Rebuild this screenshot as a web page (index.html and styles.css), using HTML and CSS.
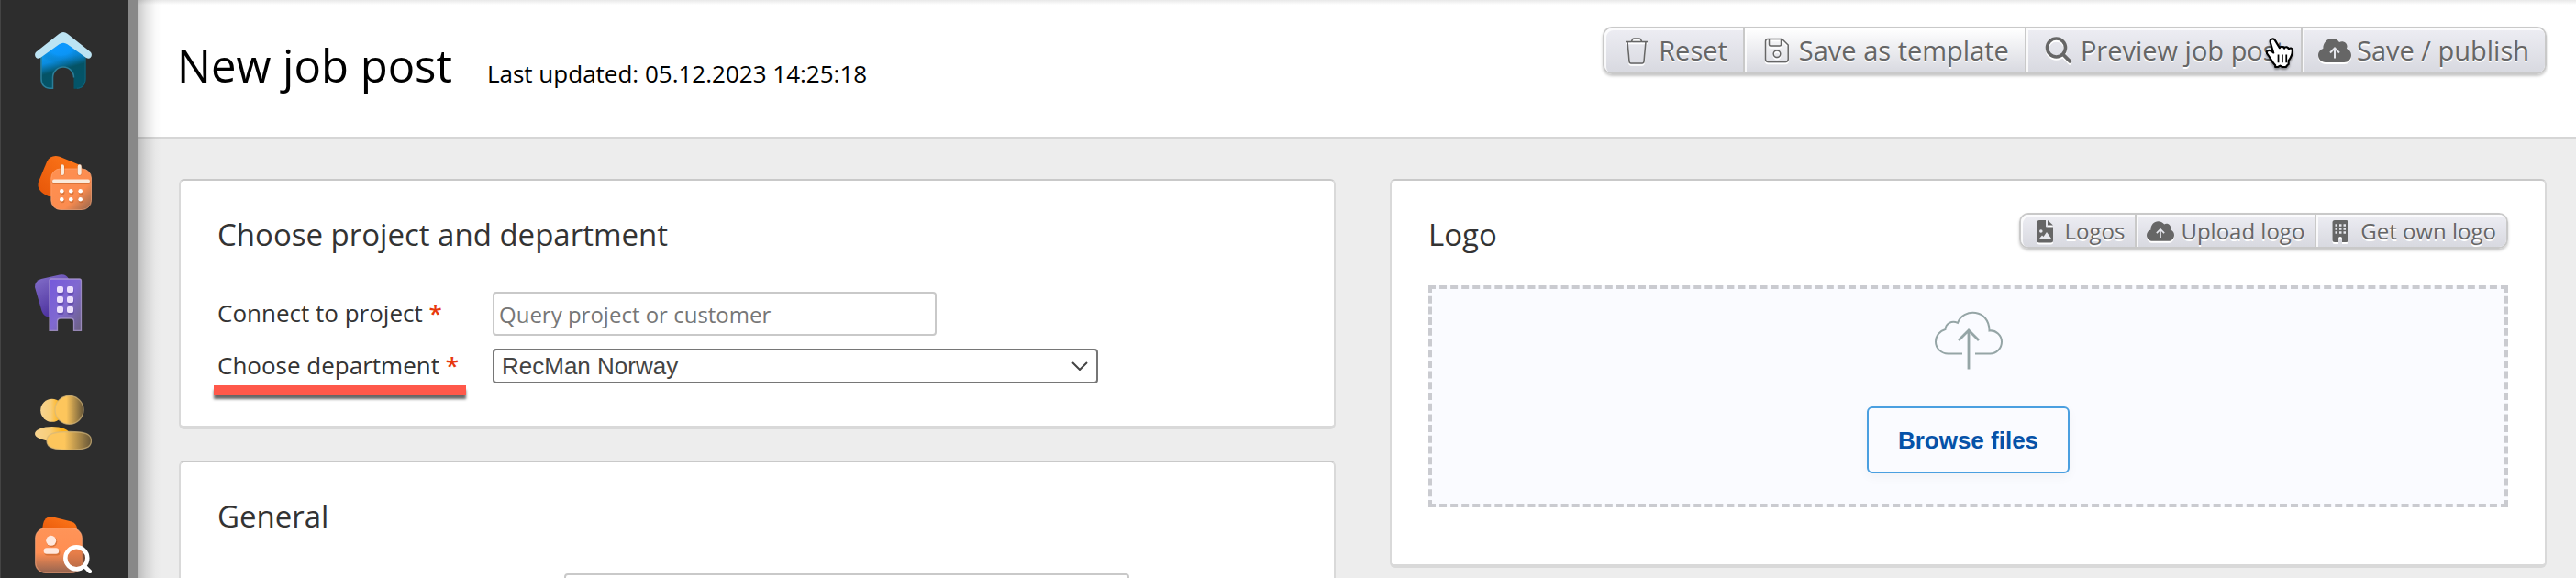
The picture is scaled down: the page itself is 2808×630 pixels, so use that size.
FILE: index.html
```html
<!DOCTYPE html>
<html lang="en">
<head>
<meta charset="utf-8">
<title>New job post</title>
<link rel="stylesheet" href="styles.css">
</head>
<body>
<svg class="defs" aria-hidden="true">
  <defs>
    <symbol id="cloud-solid" viewBox="0 0 36 26">
      <path fill="currentColor" d="M8 26C3.500 26 0 22.500 0 18.300c0-3.400 2.200-6.200 5.300-7.200C5.100 5 9.400 0 15.200 0c3.300 0 6.100 1.600 7.800 4 3.600-2.200 8.500.3 8.500 4.600 0 .8-.2 1.600-.5 2.300C33.900 12 36 14.700 36 18c0 4.500-3.400 8-7.800 8z"/>
      <path class="cutout" d="M18 21.500V11.500M13 15.500l5-5 5 5"/>
    </symbol>
    <linearGradient id="home" x1="0" y1="0.200" x2="0.200" y2="1"><stop offset="0" stop-color="#12a9ff"/><stop offset=".4" stop-color="#0a8ce0"/><stop offset=".65" stop-color="#045366"/><stop offset="1" stop-color="#045468"/></linearGradient>
    <radialGradient id="homeGlow" cx=".45" cy=".3" r=".55"><stop offset="0" stop-color="#0b96ff"/><stop offset=".5" stop-color="#0b96ff" stop-opacity=".6"/><stop offset="1" stop-color="#045a80" stop-opacity="0"/></radialGradient>
    <linearGradient id="orange" x1="1" y1="0" x2="0" y2="1"><stop offset="0" stop-color="#ff7a1c"/><stop offset="1" stop-color="#e65508"/></linearGradient>
    <linearGradient id="peach" x1="0" y1="0" x2="1" y2="1"><stop offset="0" stop-color="#ff9050"/><stop offset=".65" stop-color="#fb8c50"/><stop offset="1" stop-color="#94664e"/></linearGradient>
    <linearGradient id="peachDown" x1="0" y1="0" x2="0" y2="1"><stop offset="0" stop-color="#ff9458"/><stop offset=".55" stop-color="#ff8e52"/><stop offset="1" stop-color="#956450"/></linearGradient>
    <linearGradient id="violetBack" x1="0" y1="0" x2=".5" y2="1"><stop offset="0" stop-color="#8672cc"/><stop offset="1" stop-color="#4a2f9c"/></linearGradient>
    <linearGradient id="violet" x1="0" y1="0" x2="1" y2="1"><stop offset="0" stop-color="#7558dc"/><stop offset=".5" stop-color="#8069d0"/><stop offset="1" stop-color="#6b6080"/></linearGradient>
    <linearGradient id="goldBack"><stop offset="0" stop-color="#f8d490"/><stop offset=".45" stop-color="#f8cd78"/><stop offset=".8" stop-color="#ffb31a"/></linearGradient>
    <linearGradient id="gold"><stop offset="0" stop-color="#fdc65c"/><stop offset=".4" stop-color="#fdc65c"/><stop offset="1" stop-color="#665638"/></linearGradient>
  </defs>
</svg>
<div class="app">
  <nav class="sidebar" aria-label="Main">
    <a class="nav-link" href="#home" aria-label="Home">
      <svg viewBox="0 0 62 62">
        <path d="M6.500 21 31 5l24.500 16v30c0 7-4 10.700-9 10.700H42.500V49.500a11.400 11.400 0 0 0-23 0v12.200H16c-5.500 0-9.500-3.700-9.500-10.700z" fill="url(#home)"/>
        <path d="M6.500 21 31 5l24.500 16v19H6.500z" fill="url(#homeGlow)"/>
        <path d="M7 24v27c0 6.500 4 10.200 9 10.200h3.500V49.500a11.400 11.400 0 0 1 23 0" fill="none" stroke="#2b7d98" stroke-width="1.500"/>
        <path d="M55 24v27c0 6.500-4 10.200-9 10.200" fill="none" stroke="#12657c" stroke-width="1"/>
        <path d="M1.500 21.500 26.500 1.800Q31-1.600 35.500 1.800L60.500 21.500C64 25 60.500 31 56 28L35.500 13.300Q31 10 26.500 13.300L6 28C1.500 31-2 25 1.500 21.500z" fill="#bce3f3"/>
      </svg>
    </a>
    <a class="nav-link" href="#calendar" aria-label="Calendar">
      <svg viewBox="0 0 62 62">
        <path d="M13 9.500Q17.500 1 27 3.800L47 12Q53 15 51 21L36 48 15 47Q1 41 4 31z" fill="url(#orange)"/>
        <rect x="17.800" y="17" width="43.700" height="44.500" rx="10" fill="url(#peach)" stroke="#ffa97b" stroke-opacity=".7"/>
        <path d="M30 14.500v7.500M48.700 14.500v7.500M21 31.500h37" stroke="#b85a20" stroke-opacity=".5" stroke-width="5" stroke-linecap="round"/>
        <path d="M30 14.300v7.700M48.700 14.300v7.700M21 30.500h37" stroke="#faeadb" stroke-width="4" stroke-linecap="round"/>
        <g fill="#b85a20" opacity=".5"><circle cx="30" cy="42.800" r="2.500"/><circle cx="40" cy="42.800" r="2.500"/><circle cx="50.300" cy="42.800" r="2.500"/><circle cx="30" cy="51.800" r="2.500"/><circle cx="40" cy="51.800" r="2.500"/><circle cx="50.300" cy="51.800" r="2.500"/></g>
        <g fill="#fff"><circle cx="29.300" cy="41.300" r="2.300"/><circle cx="39.300" cy="41.300" r="2.300"/><circle cx="49.700" cy="41.300" r="2.300"/><circle cx="29.300" cy="50.300" r="2.300"/><circle cx="39.300" cy="50.300" r="2.300"/><circle cx="49.700" cy="50.300" r="2.300"/></g>
      </svg>
    </a>
    <a class="nav-link" href="#companies" aria-label="Companies">
      <svg viewBox="0 0 62 62">
        <path d="M0 14Q0 7 7 5L27 .5Q34-1 37 5v42H17Q10 47 7.500 40z" fill="url(#violetBack)"/>
        <path d="M18 5h30.500q2 0 2 2v54.300h-8V51.500q0-3.500-3.500-3.500H28q-3.500 0-3.500 3.500v9.800H16V7q0-2 2-2z" fill="url(#violet)" stroke="#b3a0da" stroke-opacity=".75" stroke-width="1.300"/>
        <g fill="#4c3695" opacity=".5"><rect x="24.500" y="15" width="7" height="7" rx="2"/><rect x="35.500" y="15" width="7" height="7" rx="2"/><rect x="24.500" y="26" width="7" height="7" rx="2"/><rect x="35.500" y="26" width="7" height="7" rx="2"/><rect x="24.500" y="37" width="7" height="7" rx="2"/><rect x="35.500" y="37" width="7" height="7" rx="2"/></g>
        <g fill="#ebdffc"><rect x="24" y="13" width="7" height="7" rx="2"/><rect x="35" y="13" width="7" height="7" rx="2"/><rect x="24" y="24" width="7" height="7" rx="2"/><rect x="35" y="24" width="7" height="7" rx="2"/><rect x="24" y="35" width="7" height="7" rx="2"/><rect x="35" y="35" width="7" height="7" rx="2"/></g>
      </svg>
    </a>
    <a class="nav-link" href="#candidates" aria-label="Candidates">
      <svg viewBox="0 0 62 62">
        <circle cx="18.700" cy="16.300" r="12.500" fill="url(#goldBack)"/>
        <circle cx="37.500" cy="15.800" r="15.500" fill="url(#gold)" stroke="#d5b87c" stroke-opacity=".7" stroke-width="1.300"/>
        <ellipse cx="18.800" cy="41.800" rx="18.800" ry="7.800" fill="url(#goldBack)"/>
        <path d="M13 49.500C13 42 20 39.500 37.500 39.500s24 2.500 24 10-7 9.800-24 9.800-24.500-2.300-24.500-9.800z" fill="url(#gold)" stroke="#d5b87c" stroke-opacity=".7" stroke-width="1.300"/>
      </svg>
    </a>
    <a class="nav-link" href="#search" aria-label="Candidate search">
      <svg viewBox="0 0 62 62">
        <path d="M9 8Q11-1 19 .3L40 5.500Q46 7.500 46 14v6H7z" fill="url(#orange)"/>
        <rect x=".6" y="12.600" width="50.800" height="48.800" rx="11" fill="url(#peachDown)" stroke="#ffa97b" stroke-opacity=".6" stroke-width="1.200"/>
        <circle cx="18.500" cy="27.500" r="5.800" fill="#b85a20" opacity=".5"/><rect x="10.500" y="36" width="17" height="6.500" rx="3.200" fill="#b85a20" opacity=".5"/>
        <circle cx="17.700" cy="26.300" r="5.500" fill="#ffe8de"/><rect x="9.700" y="34.300" width="16.500" height="6.500" rx="3.200" fill="#ffe8de"/>
        <path d="M54.500 54.500 60 60" stroke="#fff" stroke-width="4.500" stroke-linecap="round"/>
        <circle cx="45.300" cy="45.300" r="12" fill="#c96a3e" fill-opacity=".45" stroke="#fff" stroke-width="4.500"/>
      </svg>
    </a>
  </nav>
  <div class="rail"></div>
  <main class="main">
    <header class="page-header">
      <div class="heading">
        <h1 class="page-title">New job post</h1>
        <p class="updated">Last updated: 05.12.2023 14:25:18</p>
      </div>
      <div class="button-group">
        <button class="button" type="button">
          <svg class="icon" viewBox="0 0 36 32"><path d="M6 6.500h24M8 6.500l2 21.500q.2 2 2 2h12q1.800 0 2-2l2-21.500M12.500 6l1-2q.5-1 2-1h5q1.500 0 2 1l1 2" fill="none" stroke="currentColor" stroke-width="1.600"/></svg>
          Reset</button>
        <button class="button button-light" type="button">
          <svg class="icon" viewBox="0 0 36 32"><path d="M8 3.500h15.500L30.200 10v15.500q0 3-3 3H8.500q-3 0-3-3v-19q0-3 2.500-3zM9.500 3.500v6q0 1.500 1.500 1.500h10q1.500 0 1.500-1.500v-6" fill="none" stroke="currentColor" stroke-width="1.500"/><circle cx="18" cy="19.800" r="3.800" fill="none" stroke="currentColor" stroke-width="1.500"/></svg>
          Save as template</button>
        <button class="button" type="button">
          <svg class="icon" viewBox="0 0 36 32"><circle cx="15.500" cy="13" r="10" fill="none" stroke="currentColor" stroke-width="3.600"/><path d="M23 20.500l7.300 7.300" stroke="currentColor" stroke-width="3.800" stroke-linecap="round"/></svg>
          Preview job post
          <svg class="pointer" viewBox="0 0 32 36" aria-hidden="true"><path d="M8 2.500c-2 .5-2.500 2-2 4L9.500 18c-2-2-5-3.500-7-2-1.500 1.500-.5 3 .8 4.500 3 3.500 4.500 8.500 8.200 11.500V34h3l2.500-1.500 2.500 1.500h4l2-2.500 1-.5v-4c3-4 4.500-8 4.300-12-.1-2.300-3-3-4-.8-.3-2.800-4-3.600-5.200-1.200-.8-2.400-4.200-2.800-5.200-.4L11.700 4.700C11 2.800 9.500 2 8 2.500z" fill="#fff" stroke="#000" stroke-width="2.200" stroke-linejoin="round"/><path d="M15 20v9M19.500 20v9M24 20v9" stroke="#000" stroke-width="1.800"/></svg>
        </button>
        <button class="button" type="button">
          <svg class="icon"><use href="#cloud-solid"/></svg>
          Save / publish</button>
      </div>
    </header>
    <div class="content">
      <div class="column">
        <section class="card">
          <h2 class="card-title">Choose project and department</h2>
          <form class="fields">
            <label class="label" for="project">Connect to project <span class="required">*</span></label>
            <input class="text-input project-input" id="project" type="text" placeholder="Query project or customer">
            <label class="label marked" for="department">Choose department <span class="required">*</span></label>
            <div class="select-wrap">
              <select class="select" id="department"><option>RecMan Norway</option></select>
              <svg class="chevron" viewBox="0 0 18 10" aria-hidden="true"><path d="M1 1l8 8 8-8" fill="none" stroke="#444" stroke-width="2"/></svg>
            </div>
          </form>
        </section>
        <section class="card">
          <h2 class="card-title">General</h2>
          <form class="general-fields">
            <input class="text-input" type="text" aria-label="Name">
          </form>
        </section>
      </div>
      <div class="column">
        <section class="card">
          <div class="card-head">
            <h2 class="card-title">Logo</h2>
            <div class="button-group small">
              <button class="button" type="button">
                <svg class="icon" viewBox="0 0 30 26"><path d="M9 1h7v6.500q0 1 1 1h7V23q0 2.500-2.500 2.500H9Q6.500 25.500 6.500 23V3.500Q6.500 1 9 1z" fill="currentColor"/><path d="M18 1v5.500h6z" fill="currentColor"/><circle cx="10.800" cy="13" r="1.800" fill="#e6e7ed"/><path d="M9 21l3-3.500 1.500 1.500 3.500-5 5 7z" fill="#e6e7ed"/></svg>
                Logos</button>
              <button class="button" type="button">
                <svg class="icon"><use href="#cloud-solid"/></svg>
                Upload logo</button>
              <button class="button" type="button">
                <svg class="icon" viewBox="0 0 30 26"><path d="M9 1h12.500Q24 1 24 3.500v19q0 2.500-2.500 2.500H17v-4q0-2-2-2t-2 2v4H9Q6.500 25 6.500 22.500v-19Q6.500 1 9 1z" fill="currentColor"/><path d="M9.500 6.500H12M14 6.500h2.500M18.500 6.500H21M9.500 10.500H12M14 10.500h2.500M18.500 10.500H21M9.500 14.500H12M14 14.500h2.500M18.500 14.500H21" stroke="#e6e7ed" stroke-width="2.500"/></svg>
                Get own logo</button>
            </div>
          </div>
          <div class="dropzone">
            <svg class="upload-icon" viewBox="0 0 74 64" aria-hidden="true"><path d="M30 46.500H14.500C7 46.500 1 40.500 1 33.500 1 26.800 5.500 21.500 11.500 20 12 13.500 18.500 9.800 25 12.800 31-3.500 59.500-2.500 59.500 21.500 66.500 20.500 73 26.500 73 33.500 73 41 67 46.500 60.500 46.500H44" fill="none" stroke="#95a5a6" stroke-width="2"/><path d="M37 63.500V21M26 32l11-11 11 11" fill="none" stroke="#95a5a6" stroke-width="2.800"/></svg>
            <button class="browse" type="button">Browse files</button>
          </div>
        </section>
      </div>
    </div>
  </main>
</div>
</body>
</html>
```
FILE: styles.css
```css
* { box-sizing: border-box; }
body {
  margin: 0;
  font-family: "Open Sans", "Noto Sans", sans-serif;
  color: #333;
  background: #ededed;
}
h1, h2, p { margin: 0; font-weight: 400; }
.defs { position: absolute; width: 0; height: 0; }

.app { display: flex; height: 100vh; overflow: hidden; }
.sidebar {
  flex: none;
  display: flex;
  flex-direction: column;
  align-items: center;
  gap: 70px;
  width: 139px;
  padding: 35px 1px 0 0;
  background: #2d2d2d;
  box-shadow: inset 1px 0 0 #444;
}
.nav-link { flex: none; display: block; width: 62px; height: 62px; }
.nav-link svg { display: block; width: 100%; height: 100%; }
.rail { flex: none; width: 11px; background: #888; }

.main {
  position: relative;
  flex: 1;
  min-width: 0;
}
.main::before {
  content: "";
  position: absolute;
  inset: 0 auto 0 0;
  width: 26px;
  background: linear-gradient(90deg, rgba(0, 0, 0, .21), rgba(0, 0, 0, .1) 35%, rgba(0, 0, 0, .02) 75%, transparent);
}
.page-header {
  display: flex;
  justify-content: space-between;
  align-items: flex-start;
  padding: 29px 32px 46px 43px;
  background: linear-gradient(#e8e8e8, #fff 5px);
  border-bottom: 2px solid #d6d6d6;
}
.heading { display: flex; align-items: baseline; gap: 38px; padding-top: 10px; color: #000; }
.page-title { font-size: 49px; line-height: 64px; }
.updated { font-size: 26px; }

.button-group {
  display: flex;
  border: 2px solid #c9c9c9;
  border-radius: 10px;
  box-shadow: 0 2px 3px rgba(0, 0, 0, .22);
}
.button {
  position: relative;
  display: flex;
  align-items: center;
  gap: 6px;
  height: 48px;
  padding: 0 17px;
  border: 0;
  border-right: 2px solid #c9c9c9;
  background: linear-gradient(#ededf3, #d8d9e0);
  box-shadow: inset 2px 2px 0 rgba(255, 255, 255, .8);
  color: #666;
  font: 29px/36px "Open Sans", "Noto Sans", sans-serif;
  text-shadow: 0 2px 0 #fff;
  white-space: nowrap;
}
.button-light { background: linear-gradient(#fff, #d8d9e0); }
.button:first-child { border-radius: 8px 0 0 8px; }
.button:last-child { border-right: 0; border-radius: 0 8px 8px 0; }
.icon { width: 36px; height: 32px; filter: drop-shadow(0 2px 0 #fff); }
.cutout { fill: none; stroke: #e6e7ed; stroke-width: 2; }
.pointer {
  position: absolute;
  right: 8px;
  top: 9px;
  width: 31px;
  height: 35px;
  filter: drop-shadow(0 2px 1px rgba(0, 0, 0, .4));
}
.small .button { height: 35px; padding: 0 11px; gap: 7px; font-size: 24px; line-height: 32px; }
.small .icon { width: 30px; height: 26px; }

.content {
  display: grid;
  grid-template-columns: 1fr 1fr;
  gap: 59px;
  align-items: start;
  padding: 44px 32px 0 45px;
}
.column { display: grid; gap: 34px; }
.card {
  padding: 35px 40px 46px;
  background: #fff;
  border: 2px solid #d9d9d9;
  border-top-color: #c9c9c9;
  border-bottom-width: 4px;
  border-radius: 6px;
}
.card-title { font-size: 33px; line-height: 48px; }
.card-head { display: flex; justify-content: space-between; align-items: flex-start; }

.fields {
  display: grid;
  grid-template-columns: 300px 1fr;
  align-items: center;
  row-gap: 14px;
  padding-top: 38px;
}
.label { position: relative; justify-self: start; padding-bottom: 2px; font-size: 26px; line-height: 36px; }
.required { color: #e8380d; font-weight: 600; }
.marked::after {
  content: "";
  position: absolute;
  left: -4px;
  right: -8px;
  top: 40px;
  height: 10px;
  background: #ff584a;
  box-shadow: 0 5px 3px rgba(0, 0, 0, .6);
}
.text-input {
  height: 48px;
  padding: 0 5px;
  border: 2px solid #c9c9c9;
  border-radius: 4px;
  background: #fff;
  font: 24px/32px "Open Sans", "Noto Sans", sans-serif;
  color: #333;
}
.text-input::placeholder { color: #777; opacity: 1; }
.project-input { width: 484px; }
.select-wrap { position: relative; width: 660px; height: 38px; }
.select {
  width: 100%;
  height: 38px;
  padding: 0 8px;
  appearance: none;
  border: 2px solid #767676;
  border-radius: 4px;
  background: #fff;
  color: #444;
  font: 26px/32px "Liberation Sans", Arial, sans-serif;
}
.chevron { position: absolute; right: 11px; top: 14px; width: 18px; height: 10px; pointer-events: none; }
.general-fields { display: flex; padding: 38px 0 0 378px; }
.general-fields .text-input { width: 616px; }

.dropzone {
  display: flex;
  flex-direction: column;
  align-items: center;
  gap: 40px;
  margin: 31px 0 16px;
  padding: 24px 0 33px;
  border: 4px dashed #cacbd0;
  background: #fafbff;
}
.upload-icon { width: 74px; height: 64px; }
.browse {
  padding: 0 32px;
  height: 73px;
  border: 2px solid #4a9fe0;
  border-radius: 6px;
  background: #fafbff;
  box-shadow: 0 4px 12px rgba(0, 0, 0, .04);
  color: #0652a8;
  font: 700 26px/32px "Liberation Sans", Arial, sans-serif;
}
```
